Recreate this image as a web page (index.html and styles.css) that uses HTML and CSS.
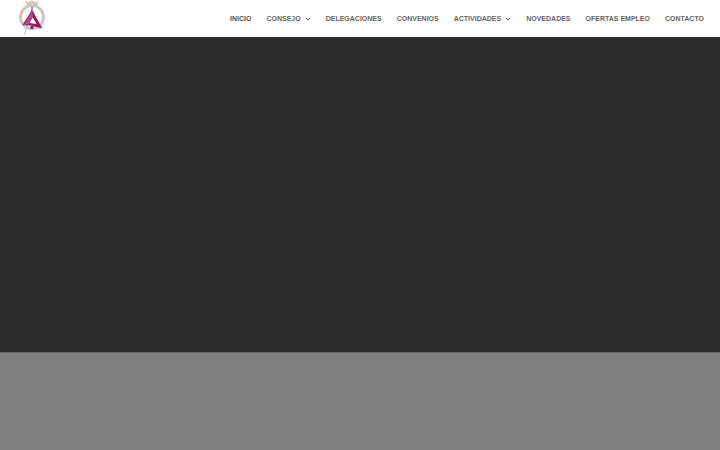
FILE: index.html
```html
<!DOCTYPE html>
<html lang="es">
<head>
<meta charset="UTF-8">
<meta name="viewport" content="width=device-width, initial-scale=1">
<title>Consejo</title>
<link rel="stylesheet" href="styles.css">
</head>
<body>
	<header class="header">
		<a class="logo" href="#" aria-label="Inicio">
			<svg width="28" height="37" viewBox="0 0 28 37">
				<!-- crown -->
				<path d="M7 1l2 6h10l2-6-3 1-4-1.500L10 2z" fill="#d8cdca"/>
				<path d="M8 2.500h12M9 5h10" stroke="#c9b9b4" stroke-width="1" stroke-dasharray="1 1" fill="none"/>
				<!-- ring -->
				<circle cx="14" cy="17" r="11.500" fill="none" stroke="#d0c7c4" stroke-width="3"/>
				<!-- compass -->
				<path d="M14 8L6.500 35M14 8l7 21" stroke="#c5b7b8" stroke-width="1" fill="none"/>
				<path d="M14 6v7" stroke="#b79aa5" stroke-width="2"/>
				<!-- set square -->
				<path fill-rule="evenodd" d="M14 10L4.500 25l8 .5 12 3zM14.500 17l4 7-7-1z" fill="#9b1763"/>
				<path d="M14 11l1 6-4 7-5 1z" fill="#b14c82"/>
				<path d="M12.500 26h3v3h-3z" fill="#9b1763"/>
			</svg>
		</a>
		<nav>
			<ul class="menu">
				<li><a class="active" href="#">INICIO</a></li>
				<li><a href="#">CONSEJO <svg class="arrow" viewBox="0 0 6 6"><path d="M1 2l2 2 2-2"/></svg></a></li>
				<li><a href="#">DELEGACIONES</a></li>
				<li><a href="#">CONVENIOS</a></li>
				<li><a href="#">ACTIVIDADES <svg class="arrow" viewBox="0 0 6 6"><path d="M1 2l2 2 2-2"/></svg></a></li>
				<li><a href="#">NOVEDADES</a></li>
				<li><a href="#">OFERTAS EMPLEO</a></li>
				<li><a href="#">CONTACTO</a></li>
			</ul>
		</nav>
	</header>
	<main class="hero"></main>
</body>
</html>
```
FILE: styles.css
```css
body{
	margin: 0;
	min-height: 100vh;
	display: flex;
	flex-direction: column;
	font-family: "Liberation Sans", Arial, sans-serif;
	background: #808080;
}
.header{
	display: flex;
	justify-content: space-between;
	align-items: center;
	padding: 0 16px 0 18px;
	background: #fff;
}
.logo svg{
	display: block;
}
.menu{
	display: flex;
	gap: 15px;
	margin: 0;
	padding: 0;
	list-style: none;
}
.menu a{
	display: flex;
	align-items: center;
	gap: 4px;
	color: #666;
	font-size: 7px;
	font-weight: 700;
	line-height: 10px;
	text-decoration: none;
	white-space: nowrap;
}
.menu .active{
	color: #555;
}
.arrow{
	width: 6px;
	height: 6px;
	fill: none;
	stroke: #666;
	stroke-width: 1;
}
.hero{
	height: 70vh;
	background: #2c2c2c;
	border-bottom: 1px solid #666;
}
```
